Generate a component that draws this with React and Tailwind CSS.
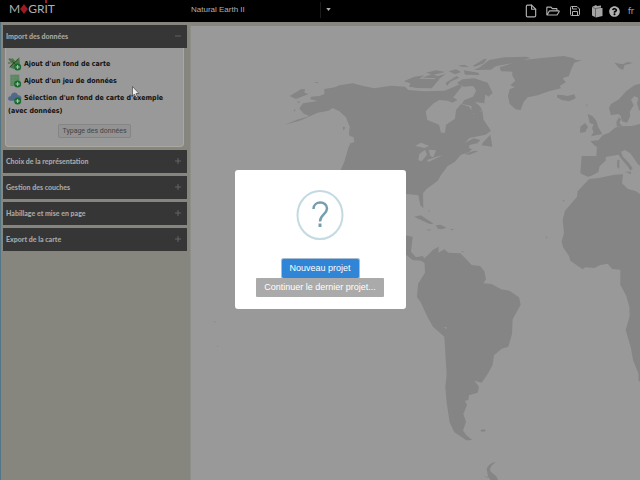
import { FiFile, FiSave } from 'react-icons/fi';
import { FaRegFolderOpen, FaQuestionCircle } from 'react-icons/fa';

const closedSections = [
  'Choix de la représentation',
  'Gestion des couches',
  'Habillage et mise en page',
  'Export de la carte',
];

function Logo() {
  return (
    <div className="flex w-[182px] items-center pl-[5px] font-['Lato'] text-[12px] leading-[17px] text-[#b0b0b0]" aria-label="Magrit">
      <span>M</span>
      <svg viewBox="0 0 14 18" className="h-[10px] w-2" fill="#a11a20">
        <path d="M7 0 L10 4 L14 9 L10 14 L7 18 L4 14 L0 9 L4 4 Z" />
      </svg>
      <span>GR</span>
      <span className="relative">
        I
        <i className="absolute top-0 left-px h-[3px] w-[2px] bg-[#a11a20]" />
      </span>
      <span>T</span>
    </div>
  );
}

function ClipboardIcon() {
  return (
    <svg viewBox="0 0 12 14" className="h-[14px] w-3">
      <path d="M1 3 L5 1 L6 2 L10 1.5 V4 L11.500 4 V12 L5 13.500 L1 11.500 Z" fill="#a5a5a5" />
      <path d="M4.500 4.500 V13 M1.500 3.500 L4.500 4.500 L10 3.500" stroke="#4a4a4a" strokeWidth="0.700" fill="none" />
    </svg>
  );
}

function TopBar() {
  const btn = (title, icon) => (
    <button type="button" title={title} className="flex h-4 w-[14px] items-center justify-center">{icon}</button>
  );

  return (
    <header className="flex h-[22px] shrink-0 items-start bg-black pl-1 text-[#b0b0b0]">
      <Logo />
      <button type="button" className="flex h-[19px] w-[149px] items-center pl-[5px] text-[8px]">
        <span className="flex-1 text-left">Natural Earth II</span>
        <span className="flex h-4 w-[15px] items-center justify-center border-l border-[#1c1c1c]">
          <svg viewBox="0 0 6 4" className="h-[3px] w-[5px]" fill="#b0b0b0"><path d="M0 0 H6 L3 4 Z" /></svg>
        </span>
      </button>
      <nav className="ml-auto flex items-center gap-2 pt-[3px] pr-[6px]">
        {btn('Nouveau projet', <FiFile className="h-[14px] w-[14px]" strokeWidth={2} />)}
        {btn('Ouvrir', <FaRegFolderOpen className="h-3 w-[14px]" />)}
        {btn('Enregistrer', <FiSave className="h-3 w-3" strokeWidth={2} />)}
        {btn('Copier', <ClipboardIcon />)}
        <div className="-ml-1 flex items-center gap-[6px]">
          {btn('Aide', <FaQuestionCircle className="h-[11px] w-[11px]" />)}
          <button type="button" className="pt-[2px] font-['DejaVu_Sans'] text-[8px]">fr</button>
        </div>
      </nav>
    </header>
  );
}

function AddIcon({ children }) {
  return (
    <svg viewBox="0 0 42 42" className="mr-[2px] inline-block h-[14px] w-[14px] align-middle">
      {children}
      <circle cx="29" cy="30" r="10.500" fill="#176b2c" />
      <path d="M29 24 V36 M23 30 H35" stroke="#b3c4b5" strokeWidth="3" />
    </svg>
  );
}

function SectionHeader({ title, open }) {
  return (
    <button
      type="button"
      className="flex h-[23px] w-full items-center justify-between bg-[#363636] pr-[6px] pb-px pl-[3px] font-['Lato'] text-[7px] font-black text-[#a8a8a8]"
    >
      <span>{title}</span>
      <svg viewBox="0 0 6 6" className="h-[6px] w-[6px]" stroke="#6c6c6c" strokeWidth="0.800">
        <path d={open ? 'M0 3 H6' : 'M0 3 H6 M3 0 V6'} />
      </svg>
    </button>
  );
}

function Sidebar() {
  const row = "block w-full text-left leading-[12px]";

  return (
    <aside className="w-[190px] shrink-0 border-l border-[#547583] bg-[#86867f] pt-[3px] pr-[3px] pl-[2px]">
      <SectionHeader title="Import des données" open />
      <div className="mr-[3px] mb-[3px] ml-[2px] rounded-b-[4px] border border-t-0 border-[#aaa9a0] bg-[#999] px-[2px] pt-[9px] pb-2 font-['DejaVu_Sans_Condensed','DejaVu_Sans'] text-[7px] font-bold text-[#111]">
        <button type="button" className={`${row} mb-[3px]`}>
          <AddIcon>
            <path d="M2 8 L14 4 L22 12 L34 1 L36 26 L16 36 L4 30 L12 20 Z" fill="#4c7848" />
            <path d="M2 6 H8 M0 18 H8 M13 13 L25 25 M5 31 L31 6" stroke="#1f3823" strokeWidth="2" />
          </AddIcon>
          Ajout d'un fond de carte
        </button>
        <button type="button" className={`${row} mb-[3px]`}>
          <AddIcon>
            <path d="M7 2 H34 V36 H7 Z" fill="#5c8660" />
            <path d="M7 11 H34 M7 19 H34 M15 3 V35" stroke="#6a936c" strokeWidth="2" />
          </AddIcon>
          Ajout d'un jeu de données
        </button>
        <button type="button" className={row}>
          <AddIcon>
            <path d="M7 29 C-4 28 0 15 8 16 C10 1 28 1 30 13 C42 12 45 29 32 29 Z" fill="#516a8a" />
          </AddIcon>
          Sélection d'un fond de carte d'exemple (avec données)
        </button>
        <div className="mt-[7px] flex justify-center">
          <button type="button" className="h-[14px] rounded-xs border border-[#858585] bg-[#939393] px-[3px] font-['Roboto'] text-[7px] font-normal leading-[12px] text-[#444]">
            Typage des données
          </button>
        </div>
      </div>
      <div className="flex flex-col gap-[3px]">
        {closedSections.map((title) => <SectionHeader key={title} title={title} />)}
      </div>
    </aside>
  );
}

function WorldMap() {
  return (
    <svg viewBox="0 18 1350 1362" preserveAspectRatio="xMinYMin slice" className="h-full w-full" fill="#858585">
      {/* North America */}
      <path d="M282 314 L318 299 L355 288 L338 281 L325 265 L336 250 L380 243 L358 238 L360 230 L386 228 L400 222 L400 207 L432 202 L445 196 L485 190 L520 199 L550 205 L600 197 L642 200 L652 210 L700 214 L760 212 L790 200 L806 192 L812 200 L790 228 L770 242 L745 240 L728 250 L704 274 L709 300 L744 314 L750 338 L762 338 L765 314 L792 296 L795 270 L810 252 L835 260 L848 282 L874 272 L878 300 L900 332 L884 344 L835 354 L822 368 L848 355 L868 360 L836 395 L810 404 L790 427 L770 438 L750 465 L740 482 L706 508 L696 520 L697 565 L688 556 L682 526 L648 522 L600 540 L610 640 L665 650 L660 695 L675 712 L695 708 L704 720 L702 730 L690 722 L665 720 L640 700 L560 650 L490 520 L448 452 L460 425 L472 383 L484 358 L474 344 L476 320 L465 292 L445 274 L425 264 L412 272 L380 278 L350 292 L326 302 Z" />
      <path d="M672 378 L690 368 L715 378 L700 384 L684 380 Z M685 402 L702 389 L708 404 L692 424 L682 421 Z M713 389 L735 391 L727 412 L718 408 Z M708 420 L755 404 L738 414 L712 426 Z M468 344 L488 352 L490 366 L480 370 L472 358 Z M835 375 L858 370 L852 389 L834 385 Z" fill="#999" />
      <path d="M874 370 L898 344 L904 380 L872 376 Z M820 402 L850 392 L862 394 L835 404 Z M770 242 L786 231 L799 240 L784 248 Z" />

      {/* Arctic islands */}
      <path d="M296 228 L330 208 L342 207 L340 218 L353 222 L315 237 Z M368 187 L382 186 L380 190 Z M318 245 L328 244 L323 250 Z M308 270 L314 268 L311 275 Z M455 320 L463 322 L458 332 Z" />
      <path d="M638 184 L670 170 L700 166 L685 176 L745 178 L736 188 L722 205 L680 204 L654 200 L658 190 Z" />
      <path d="M705 158 L735 151 L763 156 L728 164 Z M693 173 L722 163 L740 168 L764 162 L735 184 L718 186 L735 174 Z M773 154 L795 148 L810 156 L793 163 Z M800 137 L820 134 L835 142 L812 140 Z M818 151 L862 158 L865 165 L822 164 Z M764 188 L797 168 L805 173 L778 185 L768 198 Z" />
      <path d="M845 138 L878 118 L888 116 L878 130 L852 140 Z M864 143 L895 120 L940 112 L1005 110 L1018 114 L970 128 L914 139 L900 149 L848 150 Z" />
      <path d="M798 188 L815 178 L850 175 L890 188 L905 219 L892 230 L883 223 L880 250 L852 246 L868 260 L873 270 L855 283 L840 276 L842 258 L812 251 L820 240 L846 230 L855 214 L844 198 L817 200 Z" />
      <path d="M828 202 L846 198 L855 210 L844 222 L830 218 Z" fill="#999" />

      {/* Greenland and Iceland */}
      <path d="M926 142 L990 121 L1060 113 L1118 108 L1146 114 L1155 120 L1172 121 L1150 128 L1142 145 L1133 169 L1115 174 L1124 187 L1106 198 L1110 205 L1074 214 L1040 226 L1010 232 L998 246 L989 270 L974 268 L956 252 L951 228 L956 208 L971 202 L958 195 L973 182 L964 167 L964 155 L930 154 Z" />
      <path d="M1098 224 L1114 225 L1129 228 L1150 223 L1154 235 L1135 244 L1112 240 L1098 232 Z" />

      {/* Europe */}
      <path d="M1350 190 L1330 196 L1305 214 L1284 238 L1260 252 L1254 264 L1260 286 L1281 282 L1289 287 L1293 304 L1308 308 L1318 288 L1316 275 L1328 256 L1320 240 L1330 228 L1342 234 L1338 250 L1344 270 L1350 275 Z" />
      <path d="M1350 311 L1322 318 L1290 319 L1272 323 L1254 338 L1235 346 L1222 361 L1198 363 L1210 376 L1218 382 L1216 408 L1172 408 L1168 460 L1190 470 L1200 468 L1222 456 L1226 438 L1244 422 L1244 411 L1282 404 L1294 420 L1311 440 L1318 452 L1325 445 L1316 432 L1295 409 L1290 395 L1302 390 L1318 400 L1340 432 L1350 440 Z" />
      <path d="M1190 282 L1204 288 L1216 302 L1222 322 L1234 342 L1200 349 L1208 336 L1203 325 L1208 313 L1196 309 Z M1168 320 L1182 309 L1191 320 L1183 336 L1167 339 Z M1270 128 L1295 133 L1310 126 L1326 129 L1301 135 L1296 150 L1284 144 Z M1276 306 L1284 292 L1290 297 L1285 310 L1294 318 L1278 320 Z M1279 419 L1285 420 L1285 446 L1278 440 Z M1302 455 L1320 455 L1320 463 Z M1186 252 L1190 255 L1187 260 Z" />

      {/* Africa */}
      <path d="M1350 524 L1335 514 L1310 506 L1293 490 L1296 463 L1270 464 L1220 475 L1194 477 L1183 489 L1160 514 L1158 530 L1122 572 L1115 600 L1119 640 L1112 664 L1116 682 L1134 708 L1138 722 L1175 748 L1183 742 L1210 744 L1228 735 L1250 731 L1264 747 L1288 749 L1288 794 L1306 828 L1315 860 L1316 888 L1304 930 L1320 985 L1326 1020 L1342 1060 L1343 1084 L1350 1086 Z" />

      {/* Caribbean */}
      <path d="M669 590 L690 586 L728 611 L716 612 Z M735 616 L748 614 L767 623 L752 628 L740 626 Z M705 628 L722 629 L715 632 Z M778 626 L790 628 L782 631 Z M712 568 L717 575 L714 577 Z M1064 649 L1069 652 L1066 656 Z M1115 540 L1121 541 L1117 545 Z" />

      {/* South America */}
      <g transform="translate(630 660)">
        <path d="M70 55 L88 38 L95 30 L113 20 L112 38 L130 28 L142 38 L178 40 L190 52 L212 75 L237 78 L250 94 L255 118 L247 130 L272 132 L300 148 L325 152 L354 172 L359 194 L335 238 L333 282 L322 320 L302 326 L279 346 L275 374 L260 402 L242 428 L220 422 L234 440 L230 458 L204 466 L202 480 L192 482 L198 495 L187 522 L195 545 L186 572 L196 586 L214 600 L196 601 L160 577 L146 547 L137 488 L133 440 L137 405 L130 290 L96 260 L78 228 L60 188 L48 172 L51 132 L72 98 Z" />
        <path d="M238 570 L252 568 L254 574 L242 575 Z M285 666 C272 674 262 686 270 696 L286 709 L292 722 L270 722 L262 711 L246 708 L262 714 L257 686 C262 674 272 668 285 666 Z M182 34 L187 33 L186 39 Z" />
        <path d="M128 262 L138 262 L136 267 Z" fill="#999" />
      </g>
      <path d="M68 905 L74 904 L72 908 Z M78 976 L81 980 L78 981 Z" />
    </svg>
  );
}

function ProjectDialog() {
  return (
    <div className="absolute inset-0 flex items-center justify-center pb-px">
      <div role="dialog" aria-label="Projet" className="flex w-[171px] flex-col items-center rounded-[3px] bg-white pt-5 pb-3">
        <svg viewBox="0 0 48 50" className="h-[50px] w-12" fill="none">
          <ellipse cx="24" cy="25" rx="22.500" ry="24" stroke="#c4dae2" strokeWidth="2" />
          <path d="M17.500 19 C17.500 10.500 31 10.500 31 18.500 C31 24.500 24 24.500 24 31.500" stroke="#759fae" strokeWidth="2.500" />
          <path d="M22.500 33.500 H25.500 V37 H22.500 Z" fill="#759fae" />
        </svg>
        <button type="button" className="mt-[19px] h-[19px] w-[77px] rounded-[1px] bg-[#3085d6] pt-px text-[9px] text-white outline outline-[#a8bdd2]">
          Nouveau projet
        </button>
        <button type="button" className="h-[19px] w-32 rounded-[1px] bg-[#aaa] pt-px text-[9px] text-white">
          Continuer le dernier projet...
        </button>
      </div>
    </div>
  );
}

export default function App() {
  return (
    <div className="relative flex h-screen flex-col overflow-hidden bg-[#86867f] font-['Liberation_Sans',sans-serif]">
      <TopBar />
      <div className="flex min-h-0 flex-1">
        <Sidebar />
        <main className="mt-1 min-w-0 flex-1 border-l border-[#90908a] bg-[#999]">
          <WorldMap />
        </main>
      </div>
      <ProjectDialog />
      {/* Mouse pointer */}
      <svg viewBox="0 0 8 12" className="absolute top-[86px] left-[132px] h-3 w-2">
        <path d="M0.500 0.500 V10 L2.500 8 L4 11.500 L5.500 11 L4 7.500 H7 Z" fill="#eee" stroke="#333" strokeWidth="0.600" />
      </svg>
    </div>
  );
}
